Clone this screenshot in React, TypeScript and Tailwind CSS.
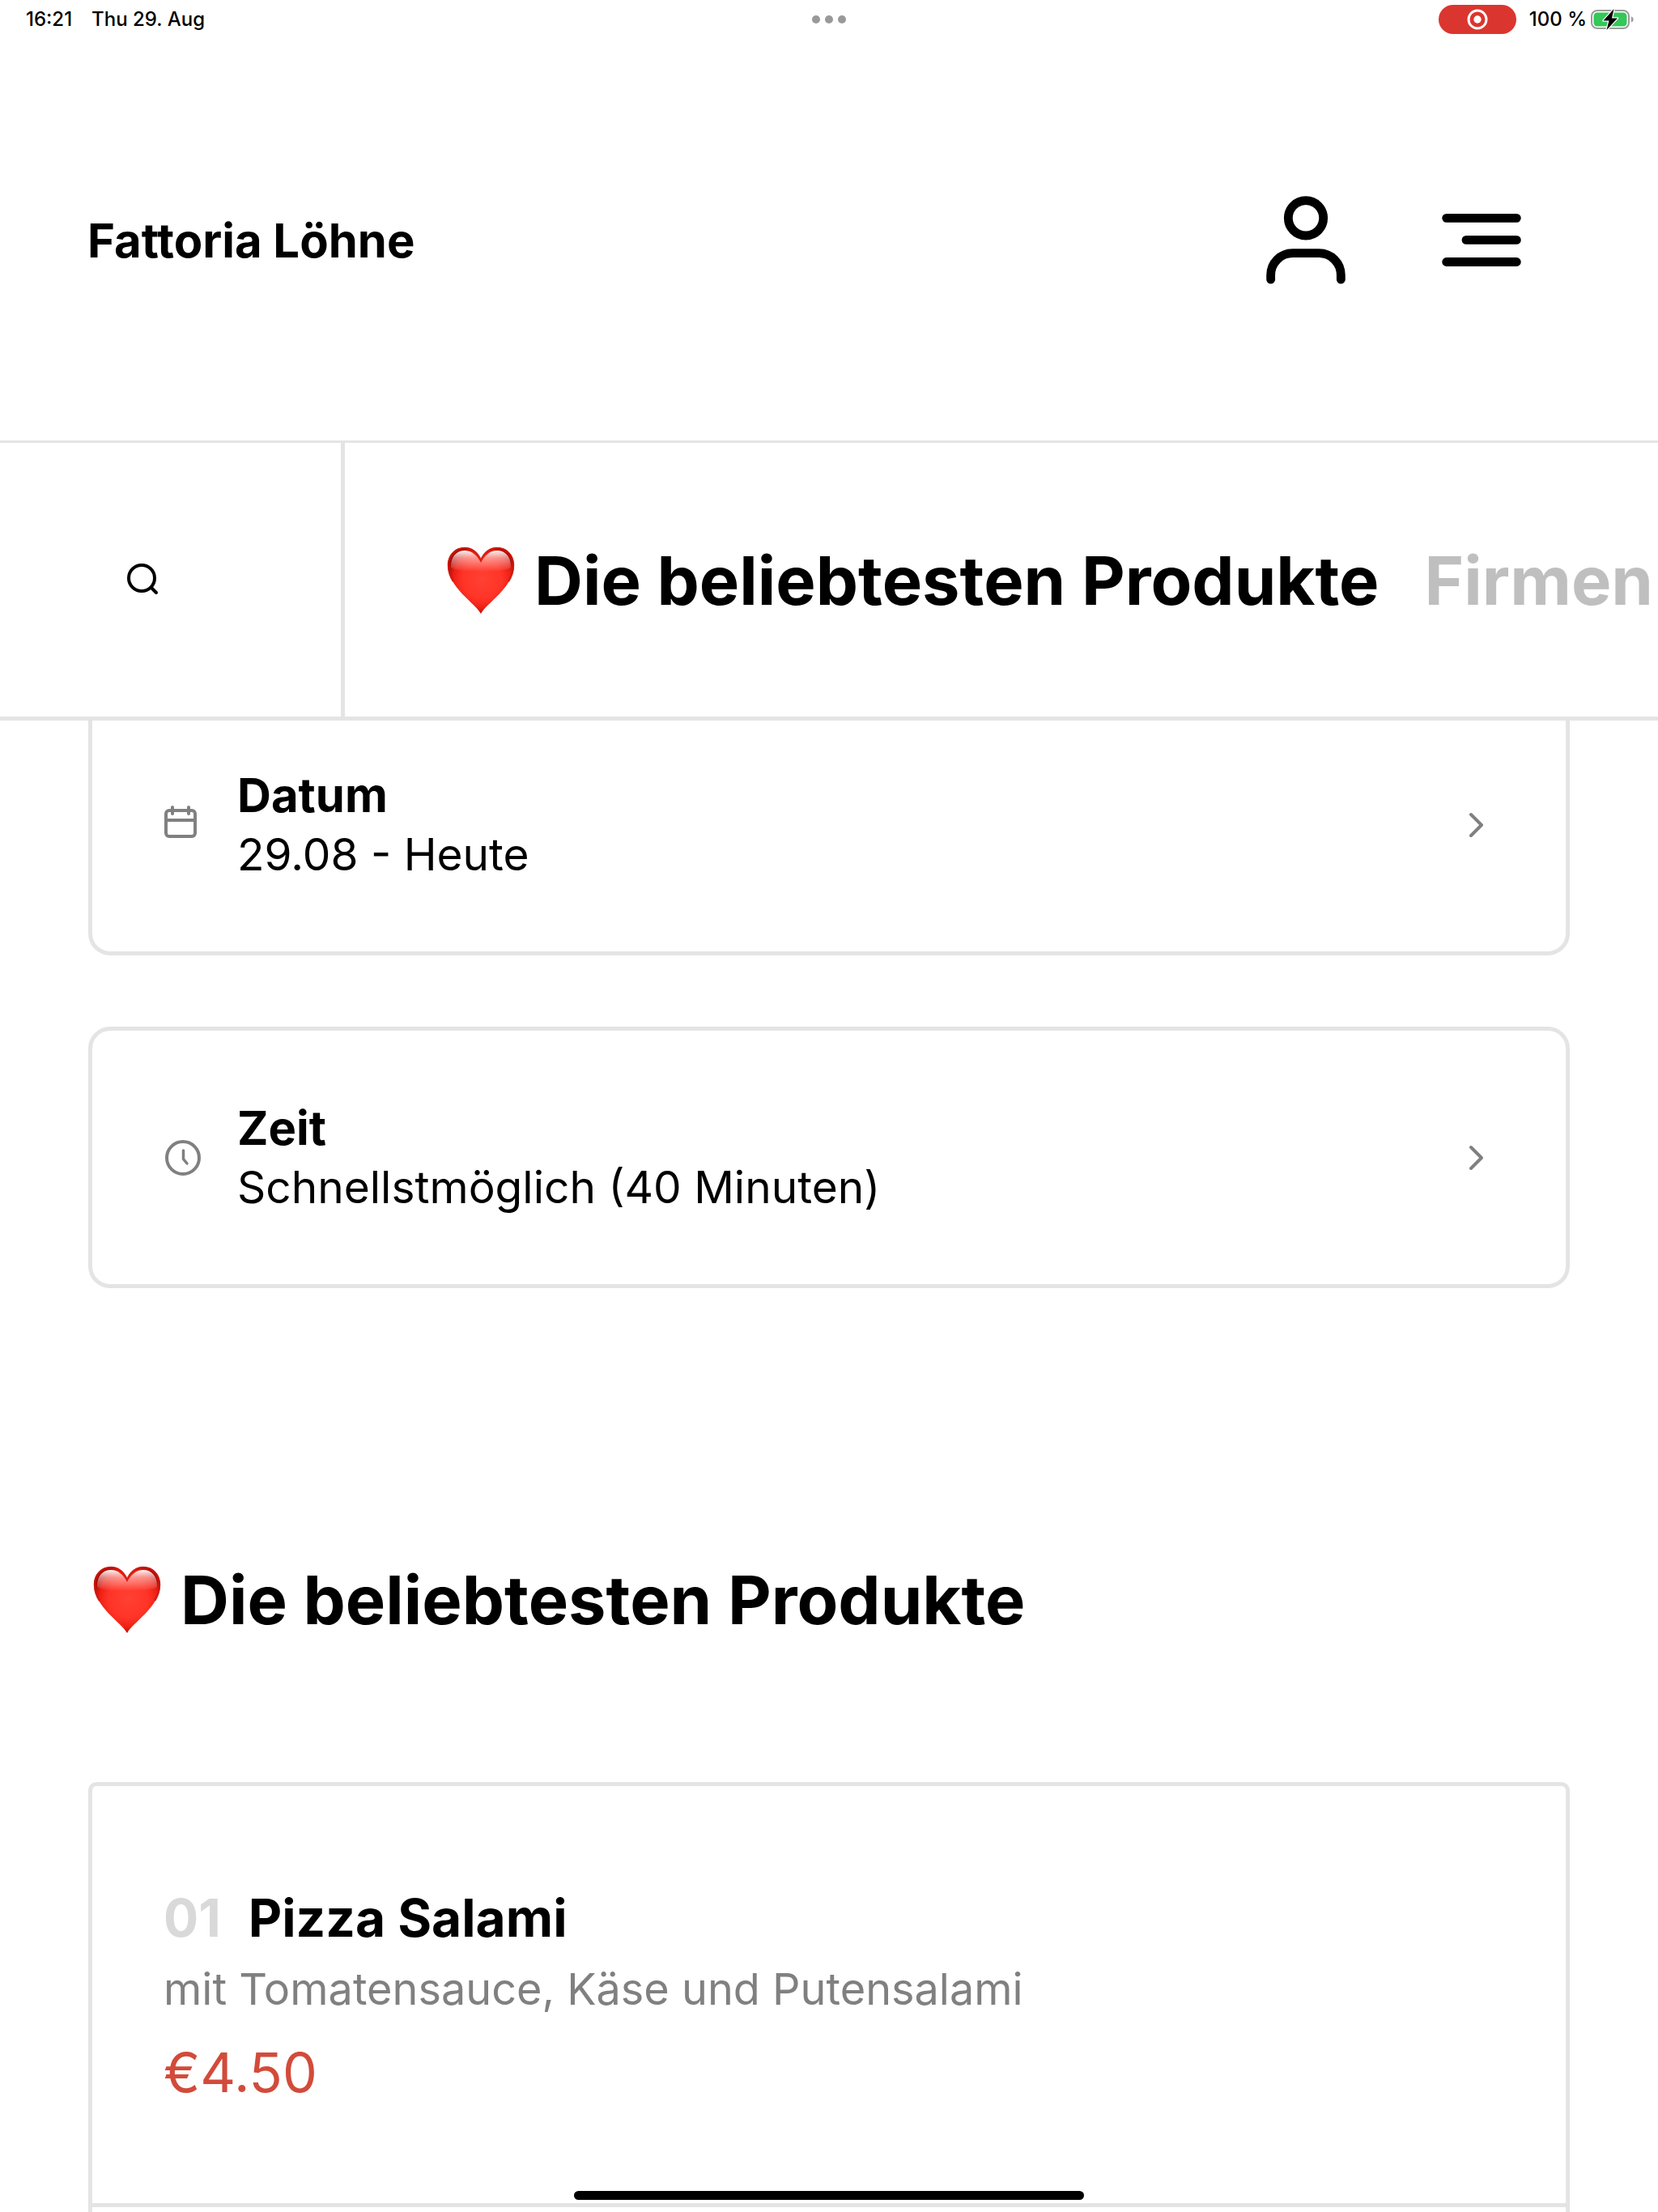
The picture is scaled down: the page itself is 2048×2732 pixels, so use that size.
import React, { useState } from 'react';

interface Product {
  number: string;
  name: string;
  description: string;
  price: string;
}

const categories = [
  { id: 'popular', label: 'Die beliebtesten Produkte', heart: true },
  { id: 'business', label: 'Firmen', heart: false },
];

const products: Product[] = [
  {
    number: '01',
    name: 'Pizza Salami',
    description: 'mit Tomatensauce, Käse und Putensalami',
    price: '€4.50',
  },
];

function Heart() {
  return (
    <svg viewBox="0 0 84 84" className="w-[84px] h-[84px] shrink-0" aria-hidden="true">
      <defs>
        <radialGradient id="heart-body" cx="0.52" cy="0.48" r="0.54">
          <stop offset="0" stopColor="#ff4133" />
          <stop offset="0.55" stopColor="#ff3427" />
          <stop offset="0.8" stopColor="#ee2015" />
          <stop offset="1" stopColor="#a80a03" />
        </radialGradient>
        <linearGradient id="heart-shine" x1="0" y1="0" x2="0" y2="1">
          <stop offset="0" stopColor="#fff" stopOpacity="0.95" />
          <stop offset="0.35" stopColor="#fff" stopOpacity="0.5" />
          <stop offset="1" stopColor="#fff" stopOpacity="0" />
        </linearGradient>
      </defs>
      <path
        d="M42 83C36 71 1 50 1 23C1 10 10 1 22 1C31 1 38 7 42 16C46 7 53 1 62 1C74 1 83 10 83 23C83 50 48 71 42 83Z"
        fill="url(#heart-body)"
      />
      <path
        d="M8 43C4 37 2 30 2 23C2 11 11 2 22 2C31 2 38 8 42 17C46 8 53 2 62 2C73 2 82 11 82 23C82 30 80 37 76 43"
        fill="none"
        stroke="#cf170d"
        strokeWidth="2.500"
        opacity="0.8"
      />
      <path
        d="M5 25C5 12 12 5 22 5C31 5 37 11 42 20C47 11 53 5 62 5C72 5 79 12 79 25C79 33 5 33 5 25Z"
        fill="url(#heart-shine)"
      />
    </svg>
  );
}

function CalendarIcon() {
  return (
    <svg viewBox="0 0 40 48" className="w-10 h-12" fill="none" stroke="#808080" strokeWidth="4" strokeLinecap="round">
      <rect x="2" y="6" width="36" height="32" rx="4" />
      <path d="M2 18H38" strokeLinecap="butt" />
      <path d="M10 2V10M30 2V10" />
    </svg>
  );
}

function ClockIcon() {
  return (
    <svg viewBox="-1 0 45 44" className="w-[45px] h-11" fill="none" stroke="#808080" strokeWidth="4">
      <circle cx="22" cy="22" r="20" />
      <path d="M22.500 13V23.500L27 29" strokeWidth="3.500" strokeLinecap="round" strokeLinejoin="round" />
    </svg>
  );
}

function OptionCard({ icon, title, value }: { icon: React.ReactNode; title: string; value: string }) {
  return (
    <button className="flex w-full items-center rounded-[27px] border-[5px] border-[#e4e4e4] bg-white pt-[84px] pb-[83px] pl-[89px] pr-[101px] text-left leading-[73px]">
      <span className="w-[90px] shrink-0">{icon}</span>
      <span className="flex-1">
        <span className="block text-[58px] font-bold">{title}</span>
        <span className="block text-[55px]">{value}</span>
      </span>
      <svg viewBox="0 0 20 32" className="w-5 h-8" fill="none" stroke="#808080" strokeWidth="4" strokeLinecap="round" strokeLinejoin="round">
        <path d="M4 3L17 16L4 29" />
      </svg>
    </button>
  );
}

function StatusBar() {
  return (
    <div className="grid h-12 grid-cols-3 items-center px-[30px] text-[24px] leading-[30px] font-medium">
      <div className="flex gap-6 pl-[2px]">
        <span>16:21</span>
        <span>Thu 29. Aug</span>
      </div>
      <div className="flex justify-center gap-[6px]">
        <span className="size-[10px] rounded-full bg-[#999]" />
        <span className="size-[10px] rounded-full bg-[#999]" />
        <span className="size-[10px] rounded-full bg-[#999]" />
      </div>
      <div className="flex items-center justify-end">
        <span className="mr-4 flex h-9 w-24 items-center justify-center rounded-full bg-[#da362f]">
          <svg viewBox="0 0 26 26" className="size-[26px]">
            <circle cx="13" cy="13" r="11" fill="none" stroke="#fff" strokeWidth="3" />
            <circle cx="13" cy="13" r="4.700" fill="#fff" />
          </svg>
        </span>
        <span className="mr-[5px]">100 %</span>
        <svg viewBox="0 0 53 28" className="h-7 w-[53px]">
          <rect x="1" y="3" width="46" height="22" rx="7" fill="none" stroke="#9b9b9b" strokeWidth="2" />
          <rect x="3.500" y="5.500" width="41" height="17" rx="4.500" fill="#34c759" />
          <path d="M50 10.500C53.500 11.500 53.500 16.500 50 17.500Z" fill="#9b9b9b" />
          <path
            d="M28.500 1L15.500 15.500H22.500L19.500 27L33 12.500H26Z"
            fill="#000"
            stroke="#fff"
            strokeWidth="2.500"
            paintOrder="stroke"
            strokeLinejoin="round"
          />
        </svg>
      </div>
    </div>
  );
}

export default function App() {
  const [active, setActive] = useState('popular');

  return (
    <div className="flex h-screen flex-col overflow-hidden bg-white font-['Inter',sans-serif] text-black">
      <header className="z-10 shrink-0 bg-white">
        <StatusBar />
        <div className="flex items-center justify-between border-b-[3px] border-[#e4e4e4] pt-[178px] pb-[188px] pl-[108px] pr-[153px]">
          <a href="#" className="pt-3 text-[58px] leading-[73px] font-bold">Fattoria Löhne</a>
          <div className="flex gap-[87px]">
            <button aria-label="Konto">
              <svg viewBox="0 0 24 24" className="size-[130px]" fill="none" stroke="currentColor" strokeWidth="2" strokeLinecap="round">
                <circle cx="12" cy="8" r="4" />
                <path d="M4 22V21A5 5 0 0 1 9 16H15A5 5 0 0 1 20 21V22" />
              </svg>
            </button>
            <button aria-label="Menü">
              <svg viewBox="0 0 24 24" className="size-[130px]" fill="none" stroke="currentColor" strokeWidth="2" strokeLinecap="round">
                <path d="M4 8H20M8.500 13H20M4 18H20" />
              </svg>
            </button>
          </div>
        </div>
        <div className="flex border-b-[5px] border-[#e4e4e4]">
          <button aria-label="Suche" className="w-[426px] shrink-0 border-r-[5px] border-[#e4e4e4] pl-[156px]">
            <svg viewBox="0 0 40 40" className="size-10" fill="none" stroke="currentColor" strokeWidth="4" strokeLinecap="round">
              <circle cx="19" cy="18" r="16" />
              <path d="M31 30L37 36" />
            </svg>
          </button>
          <nav className="flex min-w-0 flex-1 gap-14 overflow-hidden pt-[118px] pb-[116px] pl-[126px]">
            {categories.map((category) => (
              <button
                key={category.id}
                onClick={() => setActive(category.id)}
                className={
                  active === category.id
                    ? 'flex shrink-0 items-center gap-6 text-[83px] leading-[104px] font-bold whitespace-nowrap text-black'
                    : 'flex shrink-0 items-center gap-6 text-[83px] leading-[104px] font-bold whitespace-nowrap text-[#bfbfbf]'
                }
              >
                {category.heart && <Heart />}
                {category.label}
              </button>
            ))}
          </nav>
        </div>
      </header>

      {/* Content is scrolled slightly under the header */}
      <main className="-mt-[33px] shrink-0 px-[109px]">
        <div className="flex flex-col gap-[88px]">
          <OptionCard icon={<CalendarIcon />} title="Datum" value="29.08 - Heute" />
          <OptionCard icon={<ClockIcon />} title="Zeit" value="Schnellstmöglich (40 Minuten)" />
        </div>

        <h2 className="mt-[333px] flex items-center gap-6 pl-[6px] text-[83px] leading-[104px] font-bold">
          <Heart />
          Die beliebtesten Produkte
        </h2>

        <ul className="mt-[173px]">
          {products.map((product) => (
            <li key={product.number} className="rounded-t-[10px] border-x-[5px] border-t-[5px] border-[#e4e4e4] px-[88px] pt-[121px] pb-[114px]">
              <h3 className="flex gap-[34px] text-[64px] leading-[84px] font-bold">
                <span className="text-[#d9d9d9]">{product.number}</span>
                {product.name}
              </h3>
              <p className="mt-1 text-[54px] leading-[84px] text-[#808080]">{product.description}</p>
              <p className="mt-3 text-[68px] leading-[96px] text-[#d24b3a]">{product.price}</p>
            </li>
          ))}
          <li className="h-[520px] border-[5px] border-[#e4e4e4]" />
        </ul>
      </main>

      <div className="fixed bottom-[15px] left-1/2 z-20 h-[11px] w-[630px] -translate-x-1/2 rounded-full bg-black" />
    </div>
  );
}
